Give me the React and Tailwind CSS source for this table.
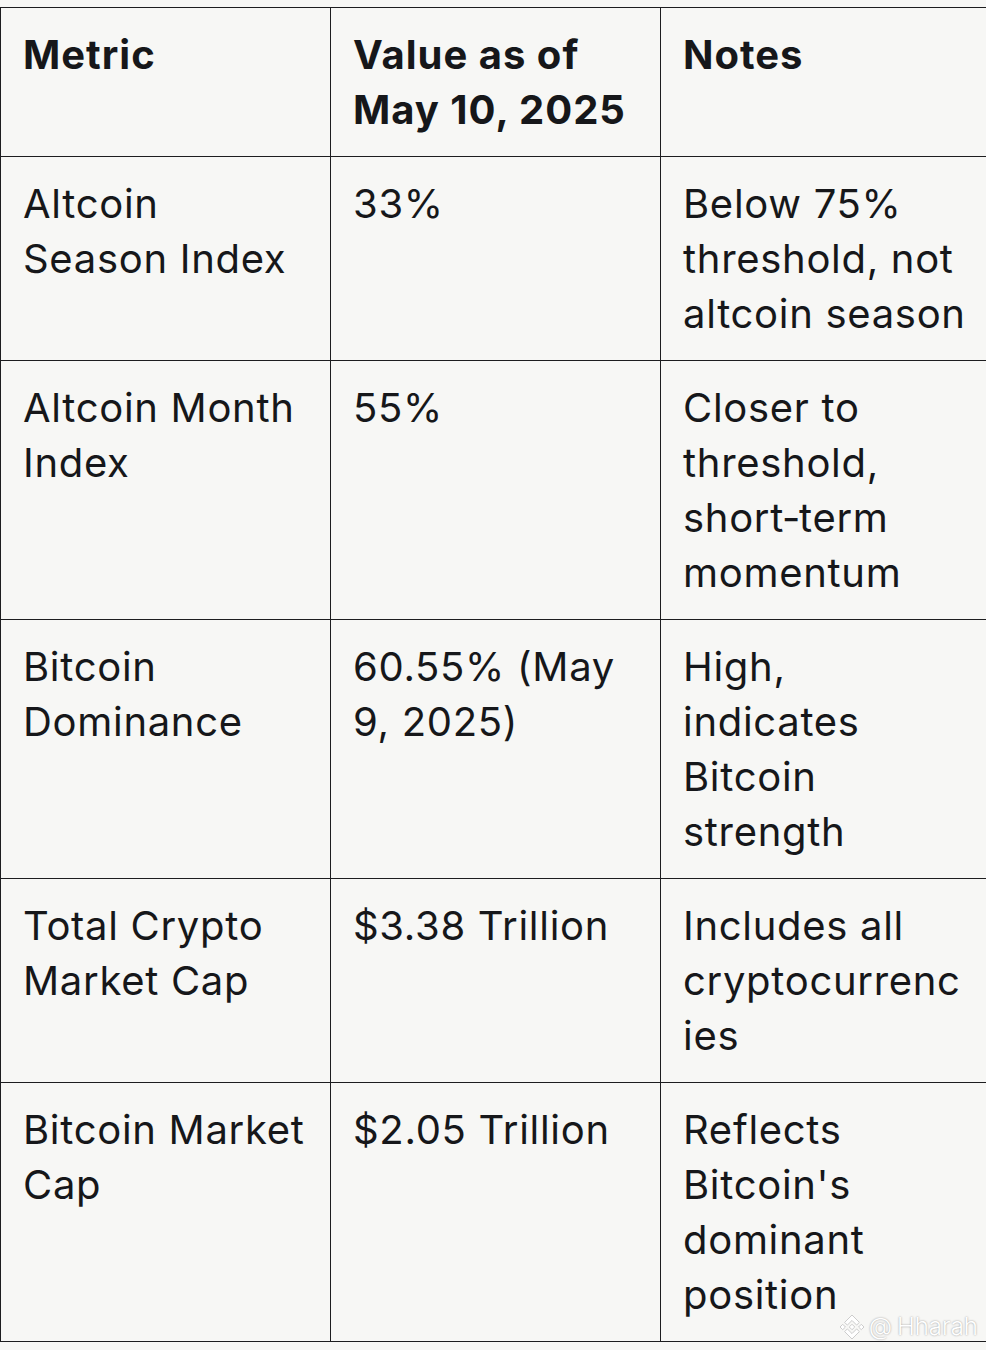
import React from "react";

const rows = [
  ["Altcoin Season Index", "33%", "Below 75% threshold, not altcoin season"],
  ["Altcoin Month Index", "55%", "Closer to threshold, short\u2011term momentum"],
  ["Bitcoin Dominance", "60.55% (May 9, 2025)", "High, indicates Bitcoin strength"],
  ["Total Crypto Market Cap", "$3.38 Trillion", "Includes all cryptocurrencies"],
  ["Bitcoin Market Cap", "$2.05 Trillion", "Reflects Bitcoin's dominant position"],
];

function BinanceMark() {
  return (
    <svg viewBox="0 0 126.61 126.61" className="w-[24px] h-[24px]">
      <g fill="#ffffff" stroke="#c9c9c9" strokeWidth="5">
        <path d="M38.73 53.2l24.59-24.58 24.6 24.6 14.3-14.31L63.32 0 24.42 38.9z" />
        <path d="M0 63.31l14.3-14.31 14.31 14.31-14.31 14.3z" />
        <path d="M38.73 73.41l24.59 24.59 24.6-24.6 14.31 14.29-38.9 38.91-38.91-38.88z" />
        <path d="M98 63.31l14.3-14.31 14.31 14.3-14.31 14.32z" />
        <path d="M77.83 63.3L63.32 48.78 52.59 59.51l-1.24 1.23-2.54 2.54 14.51 14.5 14.51-14.47z" />
      </g>
    </svg>
  );
}

function Cell({ children, head }) {
  return (
    <td
      className={`border border-[#1d1d1f] align-top pl-[22px] pr-[22px] pt-[19px] pb-[19px] break-words ${
        head ? "font-bold tracking-[1px]" : "font-normal"
      }`}
    >
      {children}
    </td>
  );
}

export default function App() {
  return (
    <div
      className="relative w-[986px] h-[1350px] overflow-hidden bg-[#f7f7f5] pt-[7px] text-[#16171a]"
      style={{ fontFamily: "Inter, 'Liberation Sans', sans-serif" }}
    >
      <table className="table-fixed border-collapse w-[991px] text-[40px] leading-[55px] tracking-[0.7px]">
        <colgroup>
          <col className="w-[330px]" />
          <col className="w-[330px]" />
          <col className="w-[331px]" />
        </colgroup>
        <thead>
          <tr>
            <Cell head>Metric</Cell>
            <Cell head>Value as of May 10, 2025</Cell>
            <Cell head>Notes</Cell>
          </tr>
        </thead>
        <tbody>
          {rows.map((r) => (
            <tr key={r[0]}>
              <Cell>{r[0]}</Cell>
              <Cell>{r[1]}</Cell>
              <Cell>{r[2]}</Cell>
            </tr>
          ))}
        </tbody>
      </table>

      <div className="absolute right-[8px] bottom-[11px] flex items-center gap-[5px] text-white text-[24px] font-light leading-none [text-shadow:0_0_2px_#8f8f8f]">
        <BinanceMark />
        <span>@</span>
        <span>Hharah</span>
      </div>
    </div>
  );
}
